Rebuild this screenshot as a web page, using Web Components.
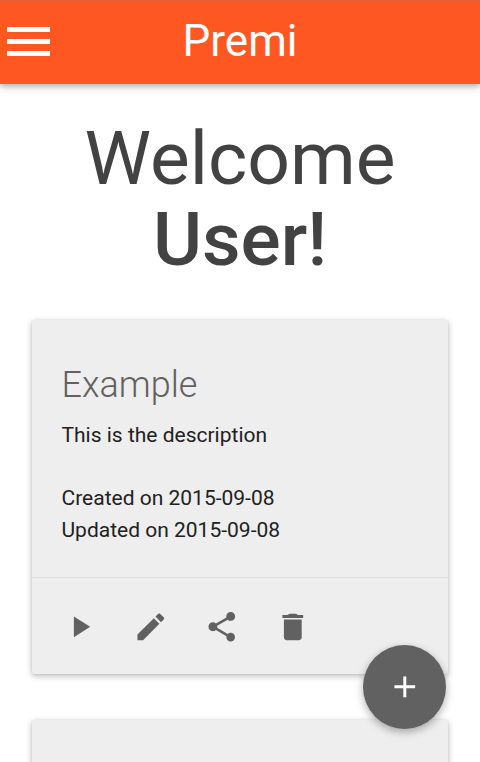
<!DOCTYPE html>
<html lang="en">
<head>
<meta charset="utf-8">
<title>Premi</title>
<style>
html{height:100%}
body{margin:0;height:100%;overflow:hidden;background:#fff;font-family:Roboto,"Liberation Sans",sans-serif;color:#212121}
</style>
</head>
<body>
<premi-app></premi-app>
<script>
const PATHS = {
  play: 'M8 5v14l11-7z',
  edit: 'M3 17.25V21h3.75L17.81 9.94l-3.75-3.75L3 17.25zM20.71 7.04c.39-.39.39-1.02 0-1.41l-2.34-2.34c-.39-.39-1.02-.39-1.41 0l-1.83 1.83 3.75 3.75 1.83-1.83z',
  share: 'M18 16.08c-.76 0-1.44.3-1.96.77L8.91 12.7c.05-.23.09-.46.09-.7s-.04-.47-.09-.7l7.05-4.11c.54.5 1.25.81 2.04.81 1.66 0 3-1.34 3-3s-1.34-3-3-3-3 1.34-3 3c0 .24.04.47.09.7L8.04 9.81C7.5 9.31 6.79 9 6 9c-1.66 0-3 1.34-3 3s1.34 3 3 3c.79 0 1.5-.31 2.04-.81l7.12 4.16c-.05.21-.08.43-.08.65 0 1.61 1.31 2.92 2.92 2.92 1.61 0 2.92-1.31 2.92-2.92s-1.31-2.92-2.92-2.92z',
  trash: 'M6 19c0 1.1.9 2 2 2h8c1.1 0 2-.9 2-2V7H6v12zM19 4h-3.5q-1-.8-2-.8h-3q-1 0-2 .8H5v2h14V4z',
  menu: 'M0 0h43v5H0zM0 12h43v5H0zM0 24h43v5H0z',
  add: 'M19 13h-6v6h-2v-6H5v-2h6V5h2v6h6v2z'
};
function define(name, html) {
  customElements.define(name, class extends HTMLElement {
    constructor() {
      super();
      const t = document.createElement('template');
      t.innerHTML = html;
      this.attachShadow({mode: 'open'}).append(t.content.cloneNode(true));
    }
  });
}
customElements.define('premi-icon', class extends HTMLElement {
  connectedCallback() {
    const root = this.shadowRoot || this.attachShadow({mode: 'open'});
    root.innerHTML = `<style>:host{display:block;width:35.6px;height:35.6px}svg{display:block;width:100%;height:100%;fill:currentColor}</style>
    <svg viewBox="${this.getAttribute('box') || '0 0 24 24'}" preserveAspectRatio="none"><path d="${PATHS[this.getAttribute('name')]}"/></svg>`;
  }
});
define('premi-toolbar', `<style>
:host{display:grid;grid-template-columns:57px 1fr 57px;align-items:center;height:84px;box-sizing:border-box;background:#ff5722;border-top:1px solid #e2603a;color:#fff;box-shadow:0 2px 7px rgba(0,0,0,.36);position:relative}
premi-icon{width:43px;height:29px;margin:0 0 2px 7px}
h1{margin:0;font-size:44px;line-height:54px;font-weight:400;text-align:center;padding-bottom:3px}
</style><premi-icon name="menu" box="0 0 43 29"></premi-icon><h1><slot></slot></h1>`);
define('premi-welcome', `<style>
:host{display:block;text-align:center;font-size:75px;line-height:81px;color:#424242;padding:34px 0 40px}
div{font-weight:400}strong{display:block;font-weight:500}
</style><div><slot></slot></div><strong><slot name="user"></slot></strong>`);
define('premi-card', `<style>
:host{display:block;margin:0 32px 46px;height:354px;background:#eee;border-radius:3px;box-shadow:0 2px 6px rgba(0,0,0,.28),0 0 3px rgba(0,0,0,.06)}
.body{height:258px;box-sizing:border-box;padding:41px 29.5px 0;border-bottom:1px solid #dedede;font-size:21px;line-height:32px}
h2{margin:0 0 9px;font-size:36px;line-height:49px;font-weight:300;color:#616161}
p{margin:0}.meta{margin-top:31px}
.actions{display:flex;gap:35.6px;padding:31px 29.6px;color:#616161}
::slotted(div){display:block}
</style><div class="body"><h2><slot name="title"></slot></h2><p><slot></slot></p><div class="meta"><slot name="created"></slot><slot name="updated"></slot></div></div>
<div class="actions"><premi-icon name="play"></premi-icon><premi-icon name="edit"></premi-icon><premi-icon name="share"></premi-icon><premi-icon name="trash"></premi-icon></div>`);
define('premi-fab', `<style>
:host{position:absolute;right:34px;bottom:33px;width:83px;height:84px;border-radius:50%;background:#616161;color:#fff;display:grid;place-items:center;box-shadow:0 3px 8px rgba(0,0,0,.32)}
</style><premi-icon name="add"></premi-icon>`);
define('premi-app', `<style>
:host{display:block;height:762px;position:relative;overflow:hidden}
</style>
<premi-toolbar>Premi</premi-toolbar>
<premi-welcome>Welcome<span slot="user">User!</span></premi-welcome>
<premi-card><span slot="title">Example</span>This is the description<div slot="created">Created on 2015-09-08</div><div slot="updated">Updated on 2015-09-08</div></premi-card>
<premi-card></premi-card>
<premi-fab></premi-fab>`);
</script>
</body>
</html>
